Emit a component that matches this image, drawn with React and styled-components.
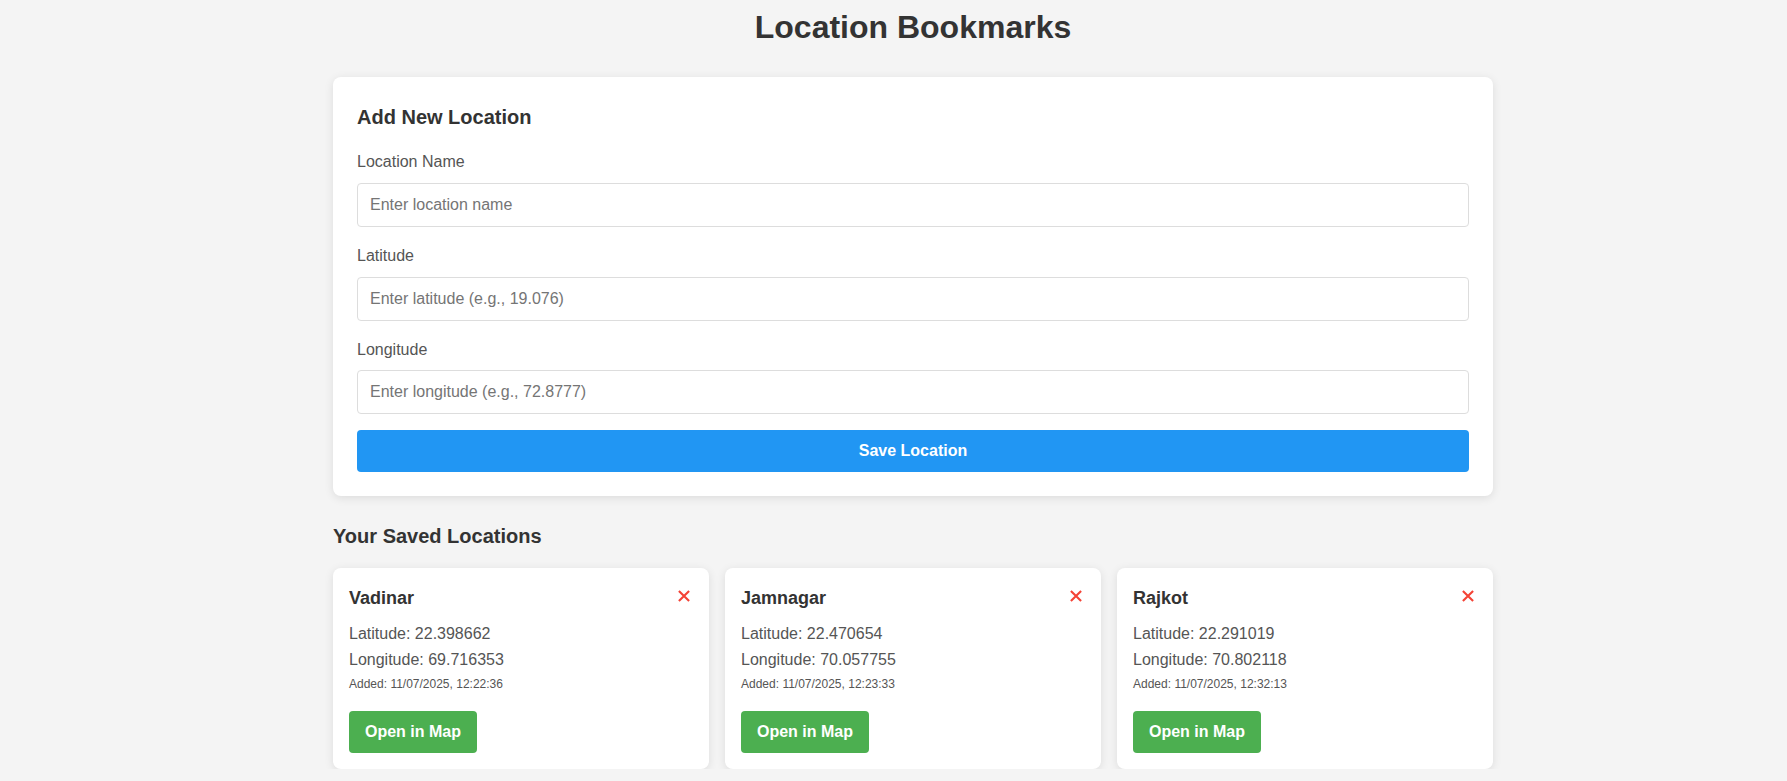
import React from "react";
import styled, { createGlobalStyle } from "styled-components";

const GlobalStyle = createGlobalStyle`
  html, body {
    background: #f4f4f4;
  }
  body {
    margin: 8px;
    font-family: "Liberation Sans", Arial, sans-serif;
    line-height: 1.6;
    color: #333;
  }
  * { box-sizing: border-box; }
`;

const Page = styled.div`
  padding-left: 39px;
`;

const Container = styled.main`
  max-width: 1160px;
  margin: 0 auto;
`;

const Title = styled.h1`
  margin: 0 0 31px;
  font-size: 32px;
  line-height: 1.2;
  font-weight: 700;
  text-align: center;
  color: #333;
`;

const FormCard = styled.section`
  background: #fff;
  border-radius: 8px;
  box-shadow: 0 2px 10px rgba(0, 0, 0, 0.1);
  padding: 24px;
`;

const SectionTitle = styled.h2`
  margin: 0 0 16px;
  font-size: 20px;
  font-weight: 700;
  line-height: 1.6;
  color: #333;
`;

const SavedTitle = styled(SectionTitle)`
  margin: 24px 0 16px;
`;

const FormGroup = styled.div`
  margin-bottom: 16px;
`;

const Label = styled.label`
  display: block;
  margin-bottom: 8px;
  font-size: 16px;
  color: #555;
`;

const Input = styled.input`
  display: block;
  width: 100%;
  height: 44px;
  padding: 0 12px;
  border: 1px solid #ddd;
  border-radius: 4px;
  font-family: "Liberation Sans", Arial, sans-serif;
  font-size: 16px;
  color: #333;
  background: #fff;
  outline: none;
  &::placeholder {
    color: #757575;
  }
`;

const PrimaryButton = styled.button`
  display: block;
  width: 100%;
  padding: 12px;
  border: none;
  border-radius: 4px;
  background: #2196f3;
  color: #fff;
  font-family: "Liberation Sans", Arial, sans-serif;
  font-size: 16px;
  font-weight: 700;
  line-height: 18px;
  cursor: pointer;
`;

const Grid = styled.div`
  display: grid;
  grid-template-columns: repeat(3, 1fr);
  gap: 16px;
`;

const LocationCard = styled.article`
  background: #fff;
  border-radius: 8px;
  box-shadow: 0 2px 10px rgba(0, 0, 0, 0.1);
  padding: 16px;
`;

const CardHeader = styled.div`
  display: flex;
  justify-content: space-between;
  align-items: flex-start;
  margin-bottom: 8px;
`;

const CardName = styled.h3`
  margin: 0;
  font-size: 18px;
  font-weight: 700;
  line-height: 1.6;
  color: #333;
`;

const DeleteButton = styled.button`
  display: flex;
  padding: 6px 3px 0 0;
  border: none;
  background: none;
  cursor: pointer;
`;

const Coord = styled.p`
  margin: 0;
  font-size: 16px;
  color: #555;
`;

const Added = styled.p`
  margin: 3px 0 0;
  font-size: 12px;
  color: #555;
`;

const MapButton = styled.button`
  margin-top: 17px;
  padding: 12px 16px;
  border: none;
  border-radius: 4px;
  background: #4caf50;
  color: #fff;
  font-family: "Liberation Sans", Arial, sans-serif;
  font-size: 16px;
  font-weight: 700;
  line-height: 18px;
  cursor: pointer;
`;

const CloseIcon = () => (
  <svg width="12" height="12" viewBox="0 0 12 12" aria-hidden="true">
    <path d="M0.9 0.9 L11.1 11.1 M11.1 0.9 L0.9 11.1" stroke="#f44336" strokeWidth="2.1" fill="none" />
  </svg>
);

const locations = [
  { name: "Vadinar", lat: "22.398662", lng: "69.716353", added: "11/07/2025, 12:22:36" },
  { name: "Jamnagar", lat: "22.470654", lng: "70.057755", added: "11/07/2025, 12:23:33" },
  { name: "Rajkot", lat: "22.291019", lng: "70.802118", added: "11/07/2025, 12:32:13" },
];

const fields = [
  { id: "name", label: "Location Name", placeholder: "Enter location name" },
  { id: "lat", label: "Latitude", placeholder: "Enter latitude (e.g., 19.076)" },
  { id: "lng", label: "Longitude", placeholder: "Enter longitude (e.g., 72.8777)" },
];

export default function App() {
  return (
    <>
      <GlobalStyle />
      <Page>
        <Container>
          <Title>Location Bookmarks</Title>
          <FormCard>
            <SectionTitle>Add New Location</SectionTitle>
            {fields.map((f) => (
              <FormGroup key={f.id}>
                <Label htmlFor={f.id}>{f.label}</Label>
                <Input id={f.id} type="text" placeholder={f.placeholder} />
              </FormGroup>
            ))}
            <PrimaryButton type="button">Save Location</PrimaryButton>
          </FormCard>
          <SavedTitle>Your Saved Locations</SavedTitle>
          <Grid>
            {locations.map((l) => (
              <LocationCard key={l.name}>
                <CardHeader>
                  <CardName>{l.name}</CardName>
                  <DeleteButton type="button" aria-label="Delete">
                    <CloseIcon />
                  </DeleteButton>
                </CardHeader>
                <Coord>Latitude: {l.lat}</Coord>
                <Coord>Longitude: {l.lng}</Coord>
                <Added>Added: {l.added}</Added>
                <MapButton type="button">Open in Map</MapButton>
              </LocationCard>
            ))}
          </Grid>
        </Container>
      </Page>
    </>
  );
}
